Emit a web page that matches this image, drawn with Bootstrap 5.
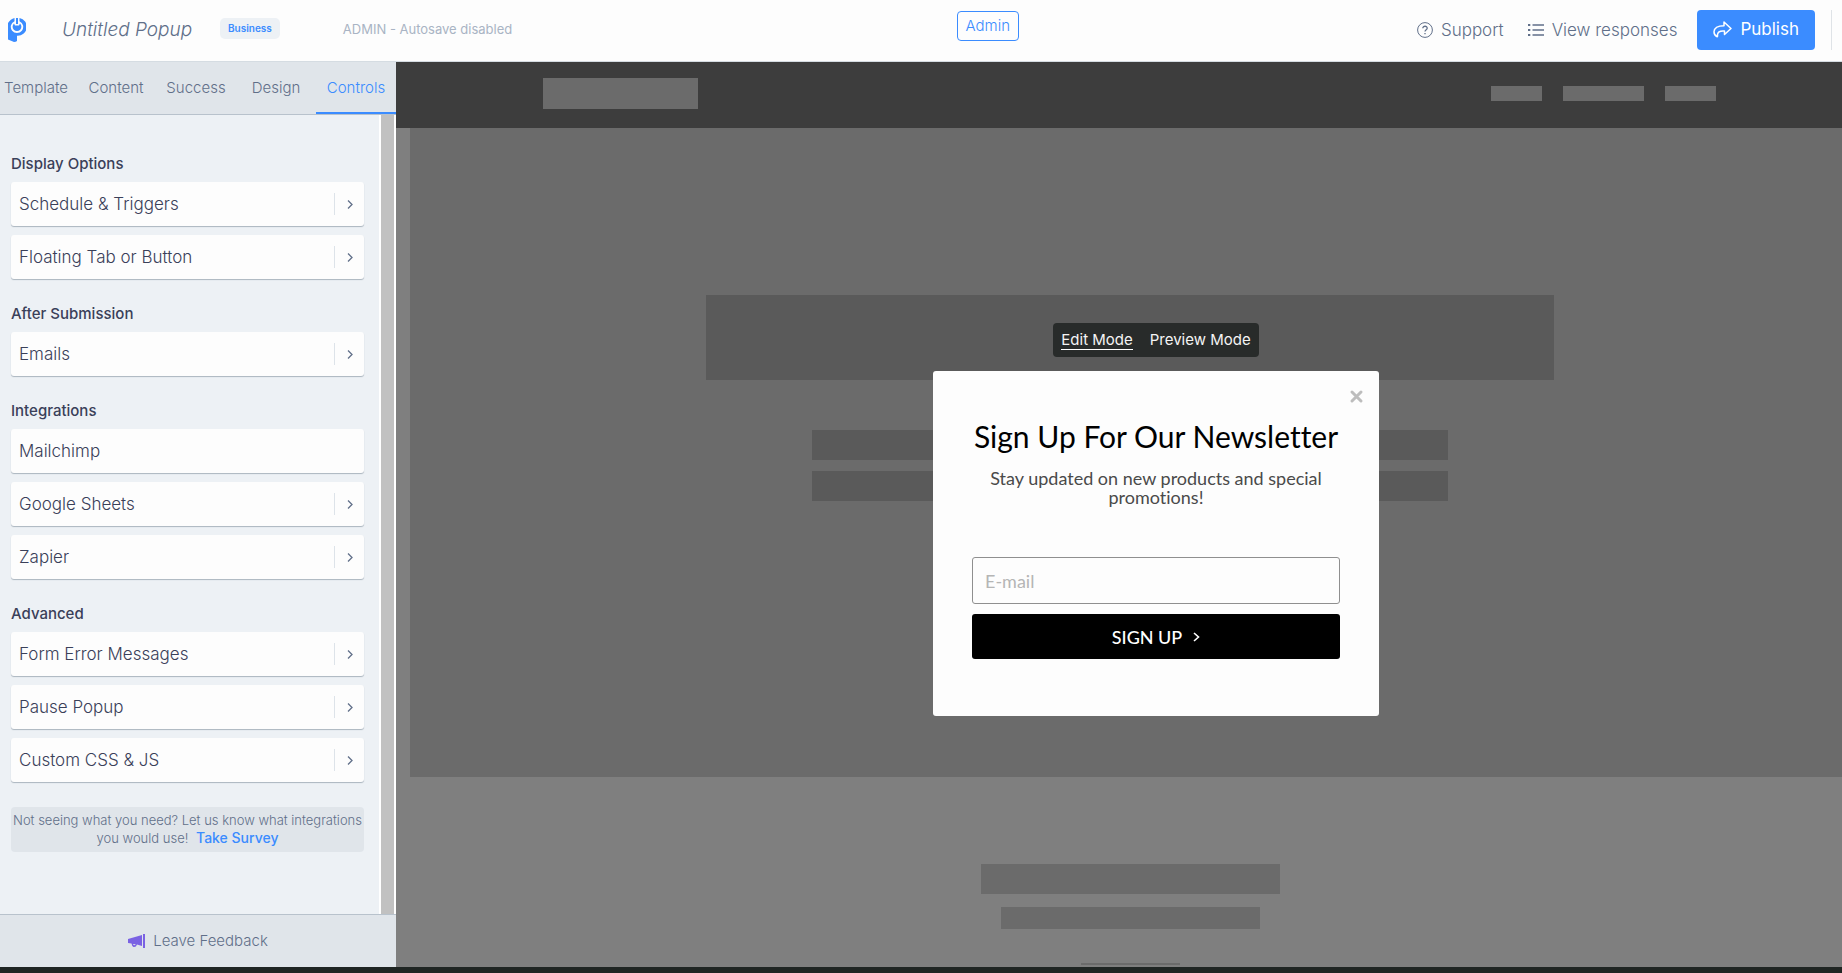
<!DOCTYPE html>
<html lang="en">
<head>
<meta charset="utf-8">
<meta name="viewport" content="width=device-width, initial-scale=1">
<title>Untitled Popup</title>
<link href="https://cdn.jsdelivr.net/npm/bootstrap@5.3.0/dist/css/bootstrap.min.css" rel="stylesheet">
<style>
:root { --blue: #3b8cff; --slate: #606f89; --ink: #3a4059; --line: #b8c2cc; --panel: #edf1f5; --bar: #e0e5ea; }
body { font-family: "Inter", "Roboto", sans-serif; font-weight: 300; font-size: 16px; line-height: 20px; color: var(--slate); background: #1f2523; padding-bottom: 6px; }
a { color: inherit; text-decoration: none; }
svg { display: block; flex: none; }

.topbar { display: grid; grid-template-columns: minmax(0, 7fr) auto minmax(0, 6fr); align-items: center; height: 62px; background: #fdfdfd; border-bottom: 1px solid #d5dce2; padding: 0 10px 2px 8px; }
.doc-title { width: 148px; height: 32px; margin-left: 36px; padding: 0; border: 0; background: none; font-style: italic; font-weight: 300; font-size: 19px; color: var(--slate); outline: 0; }
.plan { background: var(--panel); color: var(--blue); font-size: 10px; font-weight: 600; line-height: 21px; padding: 0 8px; border-radius: 5px; margin-left: 10px; margin-bottom: 2px; }
.autosave { margin-left: 63px; font-size: 13px; font-weight: 400; color: #a9b4c4; margin-bottom: 1px; }
.btn-admin { height: 30px; padding: 0 8px; margin-bottom: 8px; font-size: 15px; line-height: 16px; font-weight: 300; color: var(--blue); background: #fdfdfd; border: 1px solid var(--blue); border-radius: 4px; }
.top-link { font-size: 17px; }
.btn-publish { height: 40px; margin-left: 20px; padding: 0 16px; border: 0; border-radius: 4px; background: var(--blue); color: #fff; font-size: 17px; font-weight: 400; }
.btn-publish:hover { background: var(--blue); color: #fff; }
.end-rule { width: 1px; height: 40px; background: #dfe3e7; }

.editor { width: 396px; flex: none; background: var(--panel); }
.tabs { height: 53px; background: var(--bar); border-bottom: 1px solid var(--line); font-size: 15px; }
.tabs a { flex: 0 0 80px; padding-top: 2px; display: flex; align-items: center; justify-content: center; color: var(--slate); font-weight: 300; border-bottom: 2px solid transparent; }
.tabs a:first-child { flex-basis: 76px; padding-right: 4px; }
.tabs a.active { color: var(--blue); border-color: var(--blue); }
.pane { min-width: 0; padding: 39px 15px 0 11px; }
.track { width: 17px; flex: none; background: #c1c1c1; border: solid #fff; border-width: 0 2px; }
.group-name { margin: 0; font-size: 15px; line-height: 20px; font-weight: 500; color: var(--ink); padding-bottom: 8px; }
.group-list { display: grid; gap: 9px; margin-bottom: 25px; }
.option { height: 44px; width: 100%; padding: 0 8px; display: flex; align-items: center; justify-content: space-between; background: #fdfdfd; border: 0; border-radius: 3px; box-shadow: 0 1px 1px #aab5bf; font-size: 17px; font-weight: 300; color: var(--ink); text-align: left; }
.go { height: 22px; padding-left: 12px; padding-right: 3px; border-left: 1px solid #dde3e9; display: flex; align-items: center; }
.survey { background: var(--bar); border-radius: 4px; padding: 4px 0; font-size: 13px; line-height: 18px; min-height: 45px; text-align: center; }
.survey a { color: var(--blue); font-size: 14px; font-weight: 500; margin-left: 4px; }
.feedback { height: 53px; background: var(--bar); border-top: 1px solid var(--line); font-size: 15px; }

.stage { position: relative; background: #7f7f7f; overflow: hidden; min-width: 0; }
.block { background: #5a5a5a; max-width: 100%; }
.site-nav { height: 66px; background: #3d3d3d; padding: 0 126px 4px 147px; }
.site-nav .block, .site-foot .block { background: #6b6b6b; }
.hero { margin-left: 14px; height: 649px; padding-left: 8px; padding-top: 167px; background: #6b6b6b; }
.site-foot { padding-top: 87px; padding-left: 22px; }

.popup-layer { position: absolute; inset: 0; padding: 261px 0 0 74px; display: flex; flex-direction: column; align-items: center; }
.modes { height: 34px; margin-bottom: 14px; padding: 0 8px; gap: 17px; background: #282b2a; border-radius: 4px; display: flex; align-items: center; }
.modes button { height: 20px; padding: 0; border: 0; border-bottom: 1px solid transparent; background: none; color: #f4f4f4; font-size: 15px; line-height: 18px; font-weight: 400; }
.modes button.on { border-color: #fff; }
.popup { position: relative; width: 446px; max-width: 100%; min-height: 345px; padding: 45px 39px 0; background: #fdfdfd; border-radius: 3px; font-family: "Lato", sans-serif; font-weight: 400; font-variant-ligatures: none; text-align: center; color: #4a4a4a; }
.popup h1 { margin: 0 -10px 13px; font-size: 30px; line-height: 40px; font-weight: 400; color: #000; }
.popup p { margin: 0 0 50px; font-size: 18px; line-height: 19px; }
.popup .form-control { height: 47px; padding: 0 12px; border: 1px solid #8f8f8f; border-radius: 3px; background: #fdfdfd; font-size: 18px; }
.popup .form-control::placeholder { color: #b5b5b5; }
.btn-sign { width: 100%; height: 45px; margin-top: 10px; border: 0; border-radius: 3px; background: #000; color: #fff; font-size: 18px; font-weight: 500; display: flex; align-items: center; justify-content: center; gap: 11px; }
.dismiss { position: absolute; top: 18px; right: 15px; padding: 0; border: 0; background: none; }
</style>
</head>
<body class="min-vh-100 d-flex flex-column">
<header class="topbar">
  <div class="d-flex align-items-center">
    <a href="#" aria-label="Home"><svg width="18" height="24" viewBox="0 0 18 24"><path fill="#3b8cff" d="M0 5 Q2.500 1 6.500 0 V3.200 A6.200 6.200 0 1 0 11.500 3.200 V0 A9 9 0 0 1 9 17.800 V23 Q8 24 6 24 L0 21.500Z"/><path fill="#3b8cff" d="M8 0H10V6H8z"/><path fill="#3b8cff" d="M6 5.500 A4.400 4.400 0 1 0 12 5.500 L11 7.500 H7Z"/></svg></a>
    <input class="doc-title" aria-label="Popup name" value="Untitled Popup">
    <span class="plan">Business</span>
    <span class="autosave">ADMIN - Autosave disabled</span>
  </div>
  <button class="btn btn-admin" type="button">Admin</button>
  <div class="d-flex align-items-center justify-content-end">
    <a class="top-link d-flex align-items-center gap-2 me-4" href="#"><svg width="16" height="16" viewBox="0 0 16 16" fill="none" stroke="#606f89"><circle cx="8" cy="8" r="7.400"/><path stroke-width="1.300" d="M5.800 6.300C5.800 3.500 10.300 3.600 10.200 6.200 10.100 7.800 8 7.700 8 9.600M8 11V12.300"/></svg>Support</a>
    <a class="top-link d-flex align-items-center gap-2" href="#"><svg width="16" height="14" viewBox="0 0 16 14" stroke="#606f89" stroke-width="1.300"><path d="M4.500 2H16M4.500 7H16M4.500 12H16"/><path stroke-width="2.200" d="M0 2H2.300M0 7H2.300M0 12H2.300"/></svg>View responses</a>
    <button class="btn btn-publish d-flex align-items-center gap-2" type="button"><svg width="19" height="17" viewBox="0 0 19 17" fill="none" stroke="#fff" stroke-width="1.500" stroke-linejoin="round"><path d="M11 1 18 7.500 11.500 13.500V10C8 9.700 4.800 10.500 4.500 13.500 4.500 15 4.800 15.600 4.200 15.700 2.500 15 1 13 1 10.800 1.300 6.500 5.500 4.700 11 4.700Z"/></svg>Publish</button>
    <span class="end-rule ms-3"></span>
  </div>
</header>

<main class="d-flex flex-grow-1">
  <aside class="editor d-flex flex-column">
    <nav class="tabs d-flex">
      <a href="#">Template</a><a href="#">Content</a><a href="#">Success</a><a href="#">Design</a><a href="#" class="active">Controls</a>
    </nav>
    <div class="d-flex flex-grow-1">
      <div class="pane flex-grow-1">
        <h2 class="group-name">Display Options</h2>
        <div class="group-list">
          <button class="option" type="button">Schedule &amp; Triggers<span class="go"><svg width="6" height="9" viewBox="0 0 6 9" fill="none" stroke="#606f89" stroke-width="1.300"><path d="M1 .5 5 4.500 1 8.500"/></svg></span></button>
          <button class="option" type="button">Floating Tab or Button<span class="go"><svg width="6" height="9" viewBox="0 0 6 9" fill="none" stroke="#606f89" stroke-width="1.300"><path d="M1 .5 5 4.500 1 8.500"/></svg></span></button>
        </div>
        <h2 class="group-name">After Submission</h2>
        <div class="group-list">
          <button class="option" type="button">Emails<span class="go"><svg width="6" height="9" viewBox="0 0 6 9" fill="none" stroke="#606f89" stroke-width="1.300"><path d="M1 .5 5 4.500 1 8.500"/></svg></span></button>
        </div>
        <h2 class="group-name">Integrations</h2>
        <div class="group-list">
          <button class="option" type="button">Mailchimp</button>
          <button class="option" type="button">Google Sheets<span class="go"><svg width="6" height="9" viewBox="0 0 6 9" fill="none" stroke="#606f89" stroke-width="1.300"><path d="M1 .5 5 4.500 1 8.500"/></svg></span></button>
          <button class="option" type="button">Zapier<span class="go"><svg width="6" height="9" viewBox="0 0 6 9" fill="none" stroke="#606f89" stroke-width="1.300"><path d="M1 .5 5 4.500 1 8.500"/></svg></span></button>
        </div>
        <h2 class="group-name">Advanced</h2>
        <div class="group-list">
          <button class="option" type="button">Form Error Messages<span class="go"><svg width="6" height="9" viewBox="0 0 6 9" fill="none" stroke="#606f89" stroke-width="1.300"><path d="M1 .5 5 4.500 1 8.500"/></svg></span></button>
          <button class="option" type="button">Pause Popup<span class="go"><svg width="6" height="9" viewBox="0 0 6 9" fill="none" stroke="#606f89" stroke-width="1.300"><path d="M1 .5 5 4.500 1 8.500"/></svg></span></button>
          <button class="option" type="button">Custom CSS &amp; JS<span class="go"><svg width="6" height="9" viewBox="0 0 6 9" fill="none" stroke="#606f89" stroke-width="1.300"><path d="M1 .5 5 4.500 1 8.500"/></svg></span></button>
        </div>
        <div class="survey">Not seeing what you need? Let us know what integrations you would use! <a href="#">Take Survey</a></div>
      </div>
      <div class="track"></div>
    </div>
    <a class="feedback d-flex align-items-center justify-content-center gap-2" href="#"><svg width="17" height="14" viewBox="0 0 17 14" fill="#7a62e3"><path d="M0 5 14 1V12L9 10.500Q8 13.500 5.500 13 4 12.500 3.500 9.500L0 9ZM5 10Q6 12.300 7.800 10.300Z" fill-rule="evenodd"/><path d="M15 0H17V14H15z"/></svg>Leave Feedback</a>
  </aside>

  <section class="stage flex-grow-1">
    <div class="site-nav d-flex align-items-center justify-content-between">
      <div class="block" style="width:155px;height:31px"></div>
      <div class="d-flex" style="gap:21px">
        <div class="block" style="width:51px;height:15px"></div>
        <div class="block" style="width:81px;height:15px"></div>
        <div class="block" style="width:51px;height:15px"></div>
      </div>
    </div>
    <div class="hero d-flex flex-column align-items-center">
      <div class="block" style="width:848px;height:85px;margin-bottom:50px"></div>
      <div class="block" style="width:636px;height:30px;margin-bottom:11px"></div>
      <div class="block" style="width:636px;height:30px"></div>
    </div>
    <div class="site-foot d-flex flex-column align-items-center">
      <div class="block" style="width:299px;height:30px;margin-bottom:13px"></div>
      <div class="block" style="width:259px;height:22px;margin-bottom:34px"></div>
      <div class="block" style="width:99px;height:2px"></div>
    </div>

    <div class="popup-layer">
      <div class="modes"><button class="on" type="button">Edit Mode</button><button type="button">Preview Mode</button></div>
      <form class="popup">
        <button class="dismiss" type="button" aria-label="Close"><svg width="15" height="15" viewBox="0 0 15 15" stroke="#bdbdbd" stroke-width="3" stroke-linecap="round"><path d="M3 3 12 12M12 3 3 12"/></svg></button>
        <h1>Sign Up For Our Newsletter</h1>
        <p>Stay updated on new products and special promotions!</p>
        <input class="form-control" type="email" placeholder="E-mail" aria-label="E-mail">
        <button class="btn-sign" type="button">SIGN UP<svg width="7" height="10" viewBox="0 0 7 10" fill="none" stroke="#fff" stroke-width="1.600"><path d="M1 1 5.500 5 1 9"/></svg></button>
      </form>
    </div>
  </section>
</main>
<script src="https://cdn.jsdelivr.net/npm/bootstrap@5.3.0/dist/js/bootstrap.bundle.min.js"></script>
</body>
</html>
